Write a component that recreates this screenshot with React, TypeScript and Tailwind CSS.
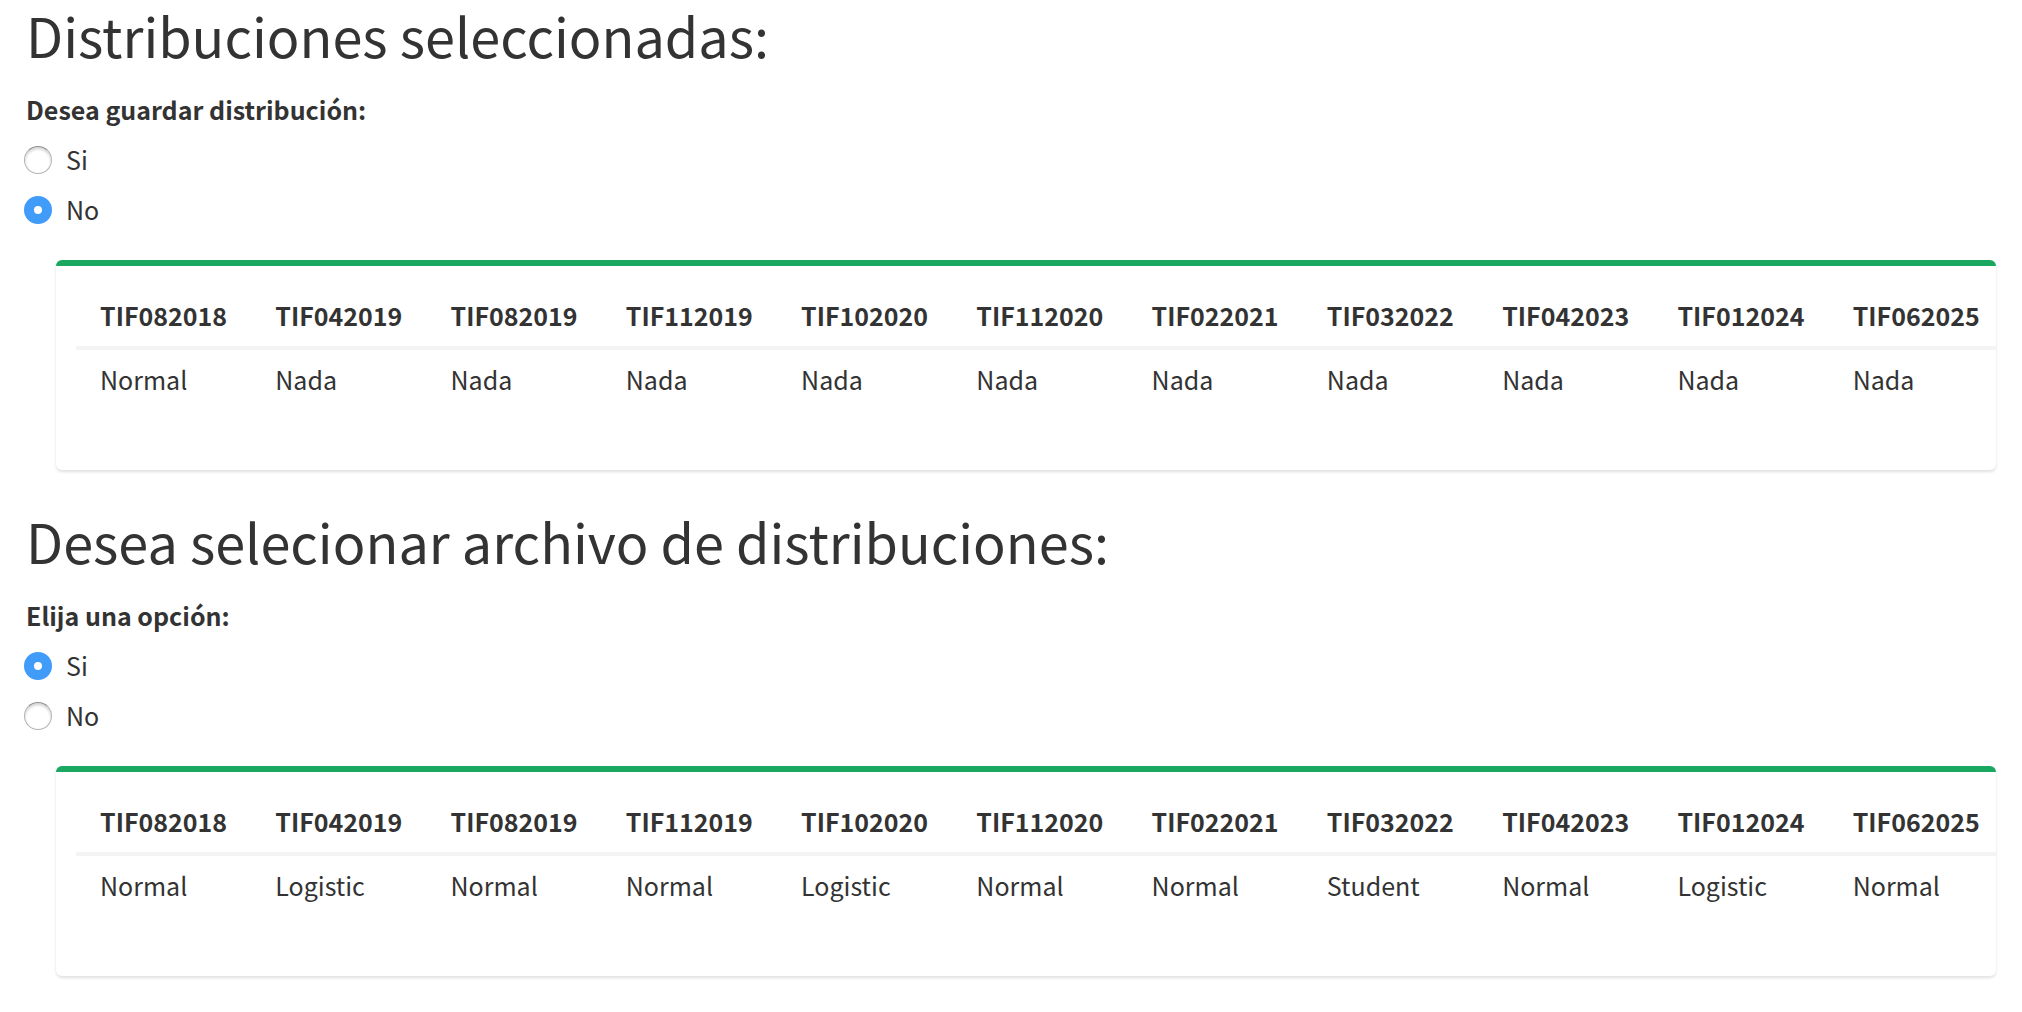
const cols = ['TIF082018','TIF042019','TIF082019','TIF112019','TIF102020','TIF112020','TIF022021','TIF032022','TIF042023','TIF012024','TIF062025'];

type RadioGroupProps = { name: string; legend: string; selected: string };

function RadioGroup({ name, legend, selected }: RadioGroupProps) {
  return (
    <fieldset className="mt-5">
      <legend className="pb-[2px] text-[25px] leading-[38px] font-bold">{legend}</legend>
      {['Si', 'No'].map((option) => (
        <label key={option} className="-ml-[2px] mt-[10px] flex h-10 items-center gap-[14px] text-[25px] leading-[38px]">
          <input
            type="radio"
            name={name}
            value={option}
            defaultChecked={option === selected}
            className="size-7 appearance-none rounded-full border border-[#b4b4b4] border-t-[#909090] bg-white shadow-[inset_0_2px_3px_#d0d0d0] checked:border-[10px] checked:border-[#419bf9] checked:shadow-none"
          />
          <span className="pb-[2px]">{option}</span>
        </label>
      ))}
    </fieldset>
  );
}

function ResultBox({ values }: { values: string[] }) {
  return (
    <div className="mt-[30px] ml-[30px] overflow-hidden rounded-md border-t-[6px] border-[#1aa760] bg-white px-5 pt-5 pb-15 shadow-[0_2px_3px_rgba(0,0,0,0.12)]">
      <table className="w-full min-w-[1928px] table-fixed text-left text-[25px] leading-9">
        <thead>
          <tr className="border-b-4 border-[#f4f4f4]">
            {cols.map((c) => <th key={c} className="px-6 pt-[11px] pb-[13px] font-bold">{c}</th>)}
          </tr>
        </thead>
        <tbody>
          <tr>
            {values.map((v, i) => <td key={i} className="px-6 pt-[11px] pb-[13px]">{v}</td>)}
          </tr>
        </tbody>
      </table>
    </div>
  );
}

export default function App() {
  return (
    <main className="bg-white pr-[26px] pl-[26px] font-['Noto_Sans_CJK_SC',sans-serif] text-[#333]">
      <section>
        <h1 className="text-[54px] leading-[70px]">Distribuciones seleccionadas:</h1>
        <RadioGroup name="guardar" legend="Desea guardar distribución:" selected="No" />
        <ResultBox values={['Normal', ...Array(10).fill('Nada')]} />
      </section>
      <section className="mt-9 pb-10">
        <h1 className="text-[54px] leading-[70px]">Desea selecionar archivo de distribuciones:</h1>
        <RadioGroup name="archivo" legend="Elija una opción:" selected="Si" />
        <ResultBox values={['Normal','Logistic','Normal','Normal','Logistic','Normal','Normal','Student','Normal','Logistic','Normal']} />
      </section>
    </main>
  );
}
